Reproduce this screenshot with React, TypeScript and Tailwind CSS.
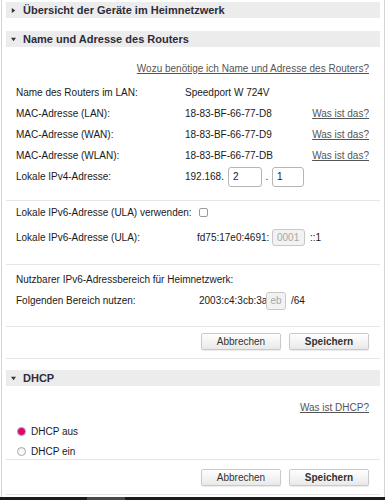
import React from "react";

const Header = ({ title, open }: { title: string; open?: boolean }) => (
  <div className="flex h-[16px] items-center bg-[#ececec] pl-[5px] text-[11px] font-bold text-[#2d2d3a]">
    <svg width="5" height="5" viewBox="0 0 6 6" className="mr-[7px]">
      {open ? <polygon points="0,1 6,1 3,5" fill="#333" /> : <polygon points="1,0 5,3 1,6" fill="#333" />}
    </svg>
    <span>{title}</span>
  </div>
);

const Sep = ({ className = "" }: { className?: string }) => (
  <div className={`border-t border-[#e6e6e6] ${className}`} />
);

const Btn = ({ children, bold }: { children: React.ReactNode; bold?: boolean }) => (
  <button
    className={`h-[17px] w-[80px] rounded-[2px] border border-[#c9c9c9] bg-gradient-to-b from-white to-[#e9e9e9] text-[10px] text-[#333] shadow-[0_1px_1px_rgba(0,0,0,0.08)] ${
      bold ? "font-bold" : ""
    }`}
  >
    {children}
  </button>
);

const Row = ({ label, children, link }: { label: string; children: React.ReactNode; link?: boolean }) => (
  <div className="flex h-[21px] items-center pl-[10px] pr-[11px] pt-[2px]">
    <span className="w-[169px] shrink-0">{label}</span>
    <span className="flex-1">{children}</span>
    {link && <a className="text-[#555] underline">Was ist das?</a>}
  </div>
);

export default function App() {
  return (
    <div className="h-[500px] w-[385px] overflow-hidden bg-white font-['Liberation_Sans',Arial,sans-serif] text-[10px] text-[#1a1a1a]">
      <div className="ml-[1px] h-[497px] w-[384px] border-x border-[#d4d4d4] px-[4px] pt-[2px]">
        <Header title="Übersicht der Geräte im Heimnetzwerk" />
        <div className="mt-[13px]">
          <Header title="Name und Adresse des Routers" open />
        </div>
        <div className="mt-[10px] flex h-[21px] items-center justify-end pr-[11px] pt-[2px]">
          <a className="text-[#555] underline">Wozu benötige ich Name und Adresse des Routers?</a>
        </div>
        <div className="mt-[3px]">
          <Row label="Name des Routers im LAN:">Speedport W 724V</Row>
          <Row label="MAC-Adresse (LAN):" link>18-83-BF-66-77-D8</Row>
          <Row label="MAC-Adresse (WAN):" link>18-83-BF-66-77-D9</Row>
          <Row label="MAC-Adresse (WLAN):" link>18-83-BF-66-77-DB</Row>
          <Row label="Lokale IPv4-Adresse:">
            <span className="flex items-center">
              <span className="w-[43px]">192.168.</span>
              <span className="flex h-[20px] w-[34px] items-center rounded-[3px] border border-[#b5b5b5] pl-[4px]">2</span>
              <span className="w-[10px] text-center">.</span>
              <span className="flex h-[20px] w-[32px] items-center rounded-[3px] border border-[#b5b5b5] pl-[4px]">1</span>
            </span>
          </Row>
        </div>
        <Sep className="mt-[14px]" />
        <div className="flex h-[21px] items-center pl-[10px] pt-[2px]">
          <span className="w-[183px] shrink-0">Lokale IPv6-Adresse (ULA) verwenden:</span>
          <span className="h-[9px] w-[9px] rounded-[2px] border border-[#9a9a9a] bg-white" />
        </div>
        <div className="mt-[4px] flex h-[21px] items-center pl-[10px] pt-[2px]">
          <span className="w-[181px] shrink-0">Lokale IPv6-Adresse (ULA):</span>
          <span className="w-[75px]">fd75:17e0:4691:</span>
          <span className="flex h-[17px] w-[33px] items-center rounded-[3px] border border-[#c8c8c8] bg-[#f2f2f2] pl-[4px] text-[#a8a8a8]">
            0001
          </span>
          <span className="ml-[5px]">::1</span>
        </div>
        <Sep className="mt-[17px]" />
        <div className="mt-[2px] flex h-[22px] items-center pl-[10px] pt-[2px]">
          Nutzbarer IPv6-Adressbereich für Heimnetzwerk:
        </div>
        <div className="flex h-[21px] items-center pl-[10px] pt-[2px]">
          <span className="w-[183px] shrink-0">Folgenden Bereich nutzen:</span>
          <span className="w-[67px]">2003:c4:3cb:3a</span>
          <span className="flex h-[18px] w-[20px] items-center justify-center rounded-[3px] border border-[#c8c8c8] bg-[#f2f2f2] text-[#a8a8a8]">
            eb
          </span>
          <span className="ml-[5px]">/64</span>
        </div>
        <Sep className="mt-[16px]" />
        <div className="mt-[6px] flex justify-end gap-[8px] pr-[11px]">
          <Btn>Abbrechen</Btn>
          <Btn bold>Speichern</Btn>
        </div>
        <Sep className="mt-[8px]" />
        <div className="mt-[11px]">
          <Header title="DHCP" open />
        </div>
        <div className="mt-[10px] flex h-[21px] items-center justify-end pr-[11px] pt-[2px]">
          <a className="text-[#555] underline">Was ist DHCP?</a>
        </div>
        <div className="mt-[3px] flex h-[20px] items-center pl-[11px] pt-[2px]">
          <span className="mr-[5px] flex h-[9px] w-[9px] items-center justify-center rounded-full border border-[#b9a0ad] bg-[#e20074]" />
          DHCP aus
        </div>
        <div className="mt-[2px] flex h-[17px] items-center pl-[11px] pt-[2px]">
          <span className="mr-[5px] h-[9px] w-[9px] rounded-full border border-[#a5a5a5] bg-gradient-to-b from-[#f0f0f0] to-white" />
          DHCP ein
        </div>
        <Sep />
        <div className="mt-[9px] flex justify-end gap-[8px] pr-[11px]">
          <Btn>Abbrechen</Btn>
          <Btn bold>Speichern</Btn>
        </div>
        <Sep className="mt-[8px]" />
      </div>
      <div className="flex h-[3px] bg-[#1b1b1b]">
        <div className="ml-[87px] w-[38px] bg-[#4a4a4a]" />
      </div>
    </div>
  );
}
